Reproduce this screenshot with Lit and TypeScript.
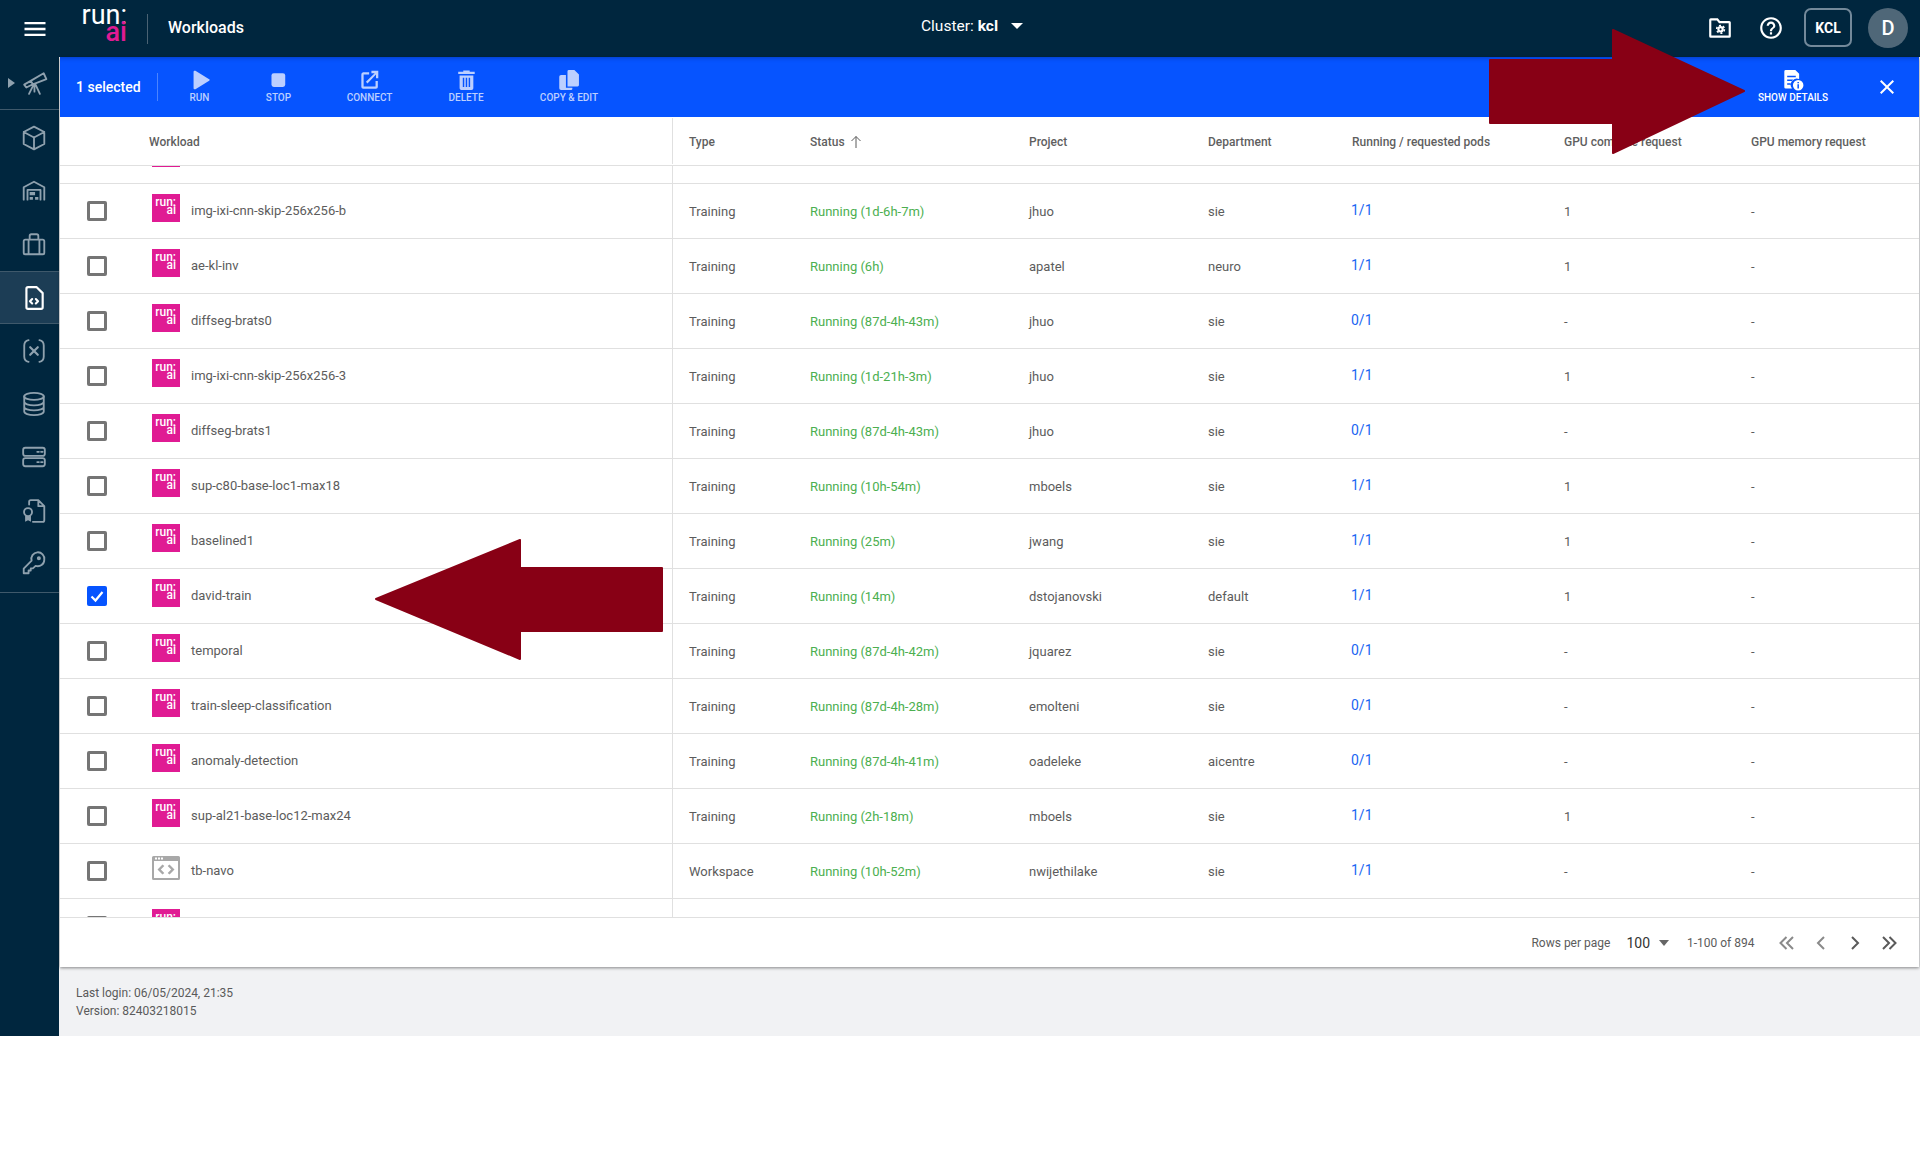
import { css, html, LitElement, svg } from 'lit';
import { customElement } from 'lit/decorators.js';

interface JobRow {
  name: string;
  type: string;
  status: string;
  project: string;
  department: string;
  pods: string;
  gpu: string;
  selected?: boolean;
}

const t = (name: string, status: string, project: string, department: string, pods: string, gpu: string): JobRow => ({
  name, type: 'Training', status, project, department, pods, gpu,
});

const ROWS: JobRow[] = [
  t('img-ixi-cnn-skip-256x256-b', 'Running (1d-6h-7m)', 'jhuo', 'sie', '1/1', '1'),
  t('ae-kl-inv', 'Running (6h)', 'apatel', 'neuro', '1/1', '1'),
  t('diffseg-brats0', 'Running (87d-4h-43m)', 'jhuo', 'sie', '0/1', '-'),
  t('img-ixi-cnn-skip-256x256-3', 'Running (1d-21h-3m)', 'jhuo', 'sie', '1/1', '1'),
  t('diffseg-brats1', 'Running (87d-4h-43m)', 'jhuo', 'sie', '0/1', '-'),
  t('sup-c80-base-loc1-max18', 'Running (10h-54m)', 'mboels', 'sie', '1/1', '1'),
  t('baselined1', 'Running (25m)', 'jwang', 'sie', '1/1', '1'),
  { ...t('david-train', 'Running (14m)', 'dstojanovski', 'default', '1/1', '1'), selected: true },
  t('temporal', 'Running (87d-4h-42m)', 'jquarez', 'sie', '0/1', '-'),
  t('train-sleep-classification', 'Running (87d-4h-28m)', 'emolteni', 'sie', '0/1', '-'),
  t('anomaly-detection', 'Running (87d-4h-41m)', 'oadeleke', 'aicentre', '0/1', '-'),
  t('sup-al21-base-loc12-max24', 'Running (2h-18m)', 'mboels', 'sie', '1/1', '1'),
  { ...t('tb-navo', 'Running (10h-52m)', 'nwijethilake', 'sie', '1/1', '-'), type: 'Workspace' },
];

const NAV_ICONS = [
  // cube
  svg`<path d="M12 1.500 21.500 6.500v11L12 22.500 2.500 17.500v-11zM2.500 6.500 12 11.500 21.500 6.500M12 11.500v11"/>`,
  // warehouse, open at the bottom
  svg`<path d="M2.500 20V8.500L12 3.500l9.500 5V20M6 20V11h12v9"/><path class="solid" d="M8 13h5v3H8zM8 17.500h3V20H8zM13 17.500h3V20h-3z"/>`,
  // briefcase
  svg`<path d="M4 8h16a1.500 1.500 0 0 1 1.500 1.500v10.500a1.500 1.500 0 0 1-1.500 1.500H4A1.500 1.500 0 0 1 2.500 20V9.500A1.500 1.500 0 0 1 4 8zM8 8V4.500A1.500 1.500 0 0 1 9.500 3h5A1.500 1.500 0 0 1 16 4.500V8M7 8v13.500M17 8v13.500"/>`,
  // workload file with code brackets
  svg`<path class="heavy" d="M6.500 2h8l5.500 5.500V20.500a1.500 1.500 0 0 1-1.500 1.500H6.500A1.500 1.500 0 0 1 5 20.500V3.500A1.500 1.500 0 0 1 6.500 2zM10.300 13 8.300 15l2 2M13.700 13l2 2-2 2"/>`,
  // (x) variables
  svg`<path d="M7 2C4 2.500 3 4.500 3 7v10c0 2.500 1 4.500 4 5M17 2c3 .5 4 2.500 4 5v10c0 2.500-1 4.500-4 5"/><path class="heavy" d="M8.500 8.500l7 7M15.500 8.500l-7 7"/>`,
  // database
  svg`<ellipse cx="12" cy="5" rx="9" ry="3.200"/><path d="M3 5v14c0 1.800 4 3.200 9 3.200s9-1.400 9-3.200V5M3 10c0 1.800 4 3.200 9 3.200s9-1.400 9-3.200M3 14.700c0 1.800 4 3.200 9 3.200s9-1.400 9-3.200"/>`,
  // servers
  svg`<rect x="2" y="3.500" width="20" height="7.500" rx="2"/><rect x="2" y="13" width="20" height="7.500" rx="2"/><path d="M15 7.200h1.500M18.500 7.200H20M15 16.700h1.500M18.500 16.700H20"/>`,
  // credential file
  svg`<path d="M7.500 6V3.500A1.500 1.500 0 0 1 9 2h7l5.500 5.500v13A1.500 1.500 0 0 1 20 22h-9M16 2v5.500h5.500"/><circle cx="6.500" cy="13" r="3.700"/><path class="solid" d="M3.800 16.500h5.400V22l-2.700-1.500L3.800 22z"/>`,
  // key
  svg`<path d="M21.500 8a6 6 0 0 1-8 5.700L11 16H9v2H7v2.500H2.500v-4.300l7.300-7.300A6 6 0 1 1 21.500 8z"/><circle cx="16.500" cy="6.800" r="1"/>`,
];

const ACTIONS = [
  { label: 'RUN', icon: svg`<path d="M5 3c0-1 1-1.500 2-1l15 9.200c.8.500.8 1.100 0 1.600L7 22c-1 .5-2 0-2-1z"/>` },
  { label: 'STOP', icon: svg`<rect x="4.500" y="4.500" width="15" height="15" rx="2.500"/>` },
  { label: 'CONNECT', icon: svg`<path d="M19 19H6V6h6V3.500H5.500A2.500 2.500 0 0 0 3.500 6v13.500a2 2 0 0 0 2 2h14a2 2 0 0 0 2-2V13H19zM14.500 2v2.500h3.600L8.500 14l1.700 1.700 9.300-9.600V10H22V2z"/>` },
  { label: 'DELETE', icon: svg`<path fill-rule="evenodd" d="M4.500 7h15v14a2 2 0 0 1-2 2h-11a2 2 0 0 1-2-2zM3 3h5.500V1.500h7V3H21v2.500H3zM8 9.500v10h1.600v-10zM11.200 9.500v10h1.600v-10zM14.400 9.500v10H16v-10z"/>` },
  { label: 'COPY & EDIT', icon: svg`<path d="M12 1h6l5 5v11.500a1.500 1.500 0 0 1-1.500 1.500H10.500V2.500A1.500 1.500 0 0 1 12 1zM3.500 6.500H8.800V20.500h7v1A1.500 1.500 0 0 1 14.300 23H3.500A2 2 0 0 1 1.500 21V8.500a2 2 0 0 1 2-2z"/>` },
];

@customElement('app-root')
export class AppRoot extends LitElement {
  static styles = css`
    :host {
      display: block;
      position: relative;
      width: 1920px;
      height: 1152px;
      font-family: Roboto, "Liberation Sans", sans-serif;
      color: #5c5c5c;
      background: #fff;
      overflow: hidden;
    }
    .shell {
      height: 1036px;
      display: grid;
      grid-template-rows: 57px 1fr;
      background: #f1f2f4;
    }
    .topbar {
      display: flex;
      align-items: center;
      background: #00263e;
      color: #fff;
      position: relative;
    }
    .burger {
      width: 28px;
      height: 28px;
      margin-left: 21px;
      fill: #fff;
    }
    .logo {
      margin: 0 0 9px 32px;
      width: 46px;
      display: flex;
      flex-direction: column;
      align-items: flex-end;
      font-weight: 400;
      font-size: 27px;
      line-height: 17px;
    }
    .logo b {
      font-weight: 500;
      color: #e01b93;
    }
    .logo-sep {
      width: 1px;
      height: 30px;
      margin: 0 20px;
      background: #4a6273;
    }
    .page-title {
      font-size: 16px;
      font-weight: 500;
      padding-bottom: 2px;
    }
    .cluster {
      position: absolute;
      left: 921px;
      top: 16px;
      display: flex;
      align-items: center;
      font-size: 15.500px;
      line-height: 20px;
    }
    .cluster b {
      font-weight: 700;
      margin-left: 4px;
    }
    .cluster i {
      margin-left: 13px;
      border: 6px solid transparent;
      border-top: 6px solid #fff;
      border-bottom: 0;
    }
    .top-right {
      margin-left: auto;
      display: flex;
      align-items: center;
      padding: 0 12px 2px 0;
    }
    .top-icon {
      width: 26px;
      height: 26px;
      margin-right: 25px;
      fill: #fff;
    }
    .top-icon .gear {
      fill: none;
      stroke: #fff;
    }
    .top-icon.help {
      margin-right: 20px;
    }
    .kcl {
      width: 44px;
      height: 35px;
      border: 2px solid #73899a;
      border-radius: 7px;
      display: flex;
      align-items: center;
      justify-content: center;
      font-size: 14px;
      font-weight: 700;
    }
    .avatar {
      width: 40px;
      height: 40px;
      margin-left: 16px;
      border-radius: 50%;
      background: #4f6778;
      display: flex;
      align-items: center;
      justify-content: center;
      font-size: 20px;
      font-weight: 500;
    }
    .body {
      display: grid;
      grid-template-columns: 59px 1fr;
      min-height: 0;
    }
    .sidebar {
      background: #00263e;
      display: flex;
      flex-direction: column;
    }
    .nav-first {
      height: 53px;
      display: flex;
      align-items: center;
      border-bottom: 1px solid #3f596b;
      box-sizing: border-box;
    }
    .nav-first i {
      margin-left: 8px;
      border: 5px solid transparent;
      border-left: 7px solid #8fa1ae;
      border-right: 0;
    }
    .nav-first svg {
      margin-left: 7px;
    }
    .nav-icon {
      width: 26px;
      height: 26px;
      fill: none;
      stroke: #8fa1ae;
      stroke-width: 1.700;
      stroke-linejoin: round;
      stroke-linecap: round;
    }
    .nav-icon .solid {
      fill: #8fa1ae;
      stroke: none;
    }
    .nav-icon .heavy {
      stroke-width: 2;
    }
    .nav-list {
      padding-top: 1px;
      border-bottom: 1px solid #3f596b;
      height: 481px;
      box-sizing: content-box;
    }
    .nav-item {
      height: 53.300px;
      display: flex;
      align-items: center;
      justify-content: center;
      padding-left: 9px;
      box-sizing: border-box;
    }
    .nav-item.active {
      background: #1c3d55;
      border-top: 1px solid #3f596b;
      border-bottom: 1px solid #3f596b;
    }
    .nav-item.active .nav-icon {
      stroke: #fff;
    }
    .main {
      position: relative;
      min-width: 0;
      margin-left: 1px;
    }
    .panel {
      background: #fff;
      box-shadow: 0 1px 3px rgba(0, 0, 0, 0.45);
      margin-right: 1px;
    }
    .actions {
      height: 60px;
      background: #0654ff;
      display: flex;
      align-items: center;
      color: #fff;
      box-shadow: inset 0 5px 4px -4px rgba(0, 20, 80, 0.35);
    }
    .selected {
      font-size: 14px;
      font-weight: 500;
      margin-left: 16px;
      width: 81px;
      height: 28px;
      line-height: 29px;
      border-right: 1px solid #4b84ff;
      box-sizing: content-box;
    }
    .action {
      position: absolute;
      top: 0;
      height: 60px;
      display: flex;
      flex-direction: column;
      align-items: center;
      transform: translateX(-50%);
      font-size: 10px;
      font-weight: 500;
      color: #bccfff;
      white-space: nowrap;
    }
    .action svg {
      width: 22px;
      height: 22px;
      margin-top: 12px;
      fill: #bccfff;
    }
    .action span {
      margin-top: 1px;
      line-height: 12px;
    }
    .action.on {
      color: #fff;
    }
    .action.on svg {
      fill: #fff;
    }
    .close {
      margin-left: auto;
      margin-right: 20px;
      width: 24px;
      height: 24px;
      fill: #fff;
    }
    .row {
      display: grid;
      grid-template-columns: 89px 524px 137px 219px 179px 144px 212px 187px 1fr;
      align-items: center;
    }
    .head {
      height: 49px;
      box-sizing: border-box;
      padding-top: 2px;
      border-bottom: 1px solid #e0e0e0;
      font-size: 12px;
      font-weight: 500;
      color: #5f5f5f;
      background: #fff;
      position: relative;
    }
    .head .sep {
      margin-top: -2px;
      padding-top: 2px;
    }
    .head .row-cell,
    .tr .row-cell {
      height: 100%;
      display: flex;
      align-items: center;
    }
    .sep {
      border-right: 1px solid #e0e0e0;
      box-sizing: border-box;
    }
    .type {
      padding-left: 16px;
      box-sizing: border-box;
    }
    .sort {
      width: 14px;
      height: 14px;
      margin-left: 4px;
      fill: none;
      stroke: #5a5a5a;
      stroke-width: 1;
    }
    .scroll {
      height: 751px;
      overflow: hidden;
      border-bottom: 1px solid #e0e0e0;
    }
    .rows {
      margin-top: -37px;
    }
    .tr {
      height: 55px;
      box-sizing: border-box;
      border-bottom: 1px solid #e0e0e0;
      font-size: 13px;
      color: #5c5c5c;
    }
    .check {
      width: 20px;
      height: 20px;
      margin-left: 27px;
      box-sizing: border-box;
      border: 3px solid #757575;
      border-radius: 2px;
      display: block;
    }
    .check.on {
      border: 0;
      background: #0654ff;
      stroke: #fff;
      stroke-width: 2.200;
      fill: none;
    }
    .job-icon {
      flex: none;
      width: 28px;
      height: 28px;
      margin: 0 11px 6px 3px;
      background: #e01b93;
      color: #fff;
      font-size: 12px;
      font-weight: 500;
      line-height: 8px;
      padding: 4px 4px 0 0;
      box-sizing: border-box;
      text-align: right;
    }
    .job-icon span {
      display: block;
    }
    .ws-icon {
      flex: none;
      width: 28px;
      height: 24px;
      margin: 0 11px 6px 3px;
      fill: #a8a8a8;
    }
    .name {
      position: relative;
      top: -1px;
    }
    .status {
      color: #4caf50;
    }
    .pods {
      color: #1a66f2;
      position: relative;
      top: -1px;
      left: -1px;
      font-size: 14px;
    }
    .foot {
      height: 49px;
      display: flex;
      align-items: center;
      font-size: 12px;
    }
    .rpp {
      margin-left: auto;
    }
    .rpp-val {
      margin-left: 16px;
      font-size: 14px;
      color: #333;
    }
    .rpp-caret {
      margin-left: 9px;
      border: 5.500px solid transparent;
      border-top: 6px solid #666;
      border-bottom: 0;
    }
    .range {
      margin-left: 18px;
      width: 73px;
    }
    .pager {
      display: flex;
      margin: 0 18px 0 15px;
      gap: 10px;
    }
    .pager svg {
      width: 24px;
      height: 24px;
      fill: none;
      stroke-width: 2;
    }
    .pager svg.off {
      stroke: #8a8a8a;
    }
    .pager svg.live {
      stroke: #5a5a5a;
    }
    .login {
      padding: 17px 0 0 16px;
      font-size: 12px;
      line-height: 18px;
      color: #5a5a5a;
    }
    .callout {
      position: absolute;
      fill: #880015;
      stroke: #880015;
      stroke-width: 2;
      stroke-linejoin: round;
      pointer-events: none;
    }
    .callout.details {
      left: 1489px;
      top: 29px;
      width: 256px;
      height: 125px;
    }
    .callout.pick {
      left: 375px;
      top: 539px;
      width: 288px;
      height: 122px;
    }
  `;

  private _renderRow(row: JobRow | null, showLogo = true) {
    const isWorkspace = row?.type === 'Workspace';
    return html`
      <div class="row tr">
        <div class="row-cell">
          ${row?.selected
            ? html`<svg class="check on" viewBox="0 0 20 20"><path d="M4.500 10.500 8.500 14.500 15.500 6"/></svg>`
            : html`<span class="check"></span>`}
        </div>
        <div class="row-cell sep">
          ${isWorkspace
            ? html`<svg class="ws-icon" viewBox="0 0 28 24">
                <path fill-rule="evenodd" d="M1.500 0h25A1.500 1.500 0 0 1 28 1.500v21a1.500 1.500 0 0 1-1.500 1.500h-25A1.500 1.500 0 0 1 0 22.500v-21A1.500 1.500 0 0 1 1.500 0zM2 5v17h24V5zM3 1.500h2v2H3zM6 1.500h2v2H6zM9 1.500h2v2H9z"/>
                <path d="M10.500 8.500 12.300 10 8.800 13.500 12.300 17 10.500 18.500 5.500 13.500zM17.500 8.500 15.700 10 19.200 13.500 15.700 17 17.500 18.500 22.500 13.500z"/>
              </svg>`
            : html`<div class="job-icon">${showLogo ? html`<span>run:</span><span>ai</span>` : ''}</div>`}
          <span class="name">${row?.name ?? ''}</span>
        </div>
        <div class="row-cell type"><span>${row?.type ?? ''}</span></div>
        <div class="row-cell"><span class="status">${row?.status ?? ''}</span></div>
        <div class="row-cell"><span>${row?.project ?? ''}</span></div>
        <div class="row-cell"><span>${row?.department ?? ''}</span></div>
        <div class="row-cell"><span class="pods">${row?.pods ?? ''}</span></div>
        <div class="row-cell"><span>${row?.gpu ?? ''}</span></div>
        <div class="row-cell"><span>${row ? '-' : ''}</span></div>
      </div>
    `;
  }

  render() {
    const actionX = [139.500, 218.500, 309.500, 406, 509];
    return html`
      <div class="shell">
        <header class="topbar">
          <svg class="burger" viewBox="0 0 24 24"><path d="M3 18h18v-2H3v2zm0-5h18v-2H3v2zm0-7v2h18V6H3z"/></svg>
          <div class="logo"><span>run:</span><b>ai</b></div>
          <div class="logo-sep"></div>
          <div class="page-title">Workloads</div>
          <div class="cluster">Cluster:<b>kcl</b><i></i></div>
          <div class="top-right">
            <svg class="top-icon" viewBox="0 0 24 24">
              <path fill-rule="evenodd" d="M3.500 3H10l2 2.500h8.500A1.500 1.500 0 0 1 22 7v12.500a1.500 1.500 0 0 1-1.500 1.500h-17A1.500 1.500 0 0 1 2 19.500v-15A1.500 1.500 0 0 1 3.500 3zM4 5v14h16V7.500h-8.900L9.100 5z"/>
              <circle class="gear" cx="12.500" cy="13.200" r="2" stroke-width="2"/>
              <circle class="gear" cx="12.500" cy="13.200" r="3.600" stroke-width="1.400" stroke-dasharray="1.900 1.870"/>
            </svg>
            <svg class="top-icon help" viewBox="0 0 24 24"><path d="M11 18h2v-2h-2v2zm1-16C6.480 2 2 6.480 2 12s4.480 10 10 10 10-4.480 10-10S17.520 2 12 2zm0 18c-4.410 0-8-3.590-8-8s3.590-8 8-8 8 3.590 8 8-3.590 8-8 8zm0-14c-2.210 0-4 1.790-4 4h2c0-1.100.9-2 2-2s2 .9 2 2c0 2-3 1.750-3 5h2c0-2.250 3-2.500 3-5 0-2.210-1.790-4-4-4z"/></svg>
            <div class="kcl">KCL</div>
            <div class="avatar">D</div>
          </div>
        </header>
        <div class="body">
          <nav class="sidebar">
            <div class="nav-first">
              <i></i>
              <svg class="nav-icon" viewBox="0 0 24 24"><path d="M2 13.500 8 10l2 3.200-6 3zM8 10 20 3l2.500 5.500-12.500 4.700zM10.500 14l-4 8M12.500 13.500l4 8.500M11.500 14v6"/></svg>
            </div>
            <div class="nav-list">
              ${NAV_ICONS.map((icon, i) => html`
                <div class="nav-item ${i === 3 ? 'active' : ''}">
                  <svg class="nav-icon" viewBox="0 0 24 24">${icon}</svg>
                </div>
              `)}
            </div>
          </nav>
          <main class="main">
            <div class="panel">
              <div class="actions">
                <div class="selected">1 selected</div>
                ${ACTIONS.map((a, i) => html`
                  <div class="action" style="left:${actionX[i]}px">
                    <svg viewBox="0 0 24 24">${a.icon}</svg>
                    <span>${a.label}</span>
                  </div>
                `)}
                <div class="action on" style="left:1733px">
                  <svg viewBox="1 1 23 23">
                    <path fill-rule="evenodd" d="M5 2h10l4 4v5.500a6.500 6.500 0 0 0-7.500 10H5A1.500 1.500 0 0 1 3.500 20V3.500A1.500 1.500 0 0 1 5 2zM6.500 8v1.500h9V8zM6.500 12v1.500h6V12zM6.500 16v1.500h3.500V16z"/>
                    <path fill-rule="evenodd" d="M18 12.500a5.500 5.500 0 1 1 0 11 5.500 5.500 0 0 1 0-11zM17.200 14.500V16h1.600v-1.500zM17.200 17v4.500h1.600V17z"/>
                  </svg>
                  <span>SHOW DETAILS</span>
                </div>
                <svg class="close" viewBox="0 0 24 24"><path d="M19 6.410 17.590 5 12 10.590 6.410 5 5 6.410 10.590 12 5 17.590 6.410 19 12 13.410 17.590 19 19 17.590 13.410 12z"/></svg>
              </div>
              <div class="row head">
                <div class="row-cell"></div>
                <div class="row-cell sep">Workload</div>
                <div class="row-cell type">Type</div>
                <div class="row-cell">Status
                  <svg class="sort" viewBox="0 0 14 14"><path d="M7 13V1.500M2.500 6 7 1.500 11.500 6"/></svg>
                </div>
                <div class="row-cell">Project</div>
                <div class="row-cell">Department</div>
                <div class="row-cell">Running / requested pods</div>
                <div class="row-cell">GPU compute request</div>
                <div class="row-cell">GPU memory request</div>
              </div>
              <div class="scroll">
                <div class="rows">
                  ${this._renderRow(null, false)}
                  ${ROWS.map(r => this._renderRow(r))}
                  ${this._renderRow(null)}
                </div>
              </div>
              <div class="foot">
                <span class="rpp">Rows per page</span>
                <span class="rpp-val">100</span>
                <i class="rpp-caret"></i>
                <span class="range">1-100 of 894</span>
                <div class="pager">
                  <svg class="off" viewBox="0 0 24 24"><path d="M11.500 6 5.500 12l6 6M18 6l-6 6 6 6"/></svg>
                  <svg class="off" viewBox="0 0 24 24"><path d="M15 6l-6 6 6 6"/></svg>
                  <svg class="live" viewBox="0 0 24 24"><path d="M9 6l6 6-6 6"/></svg>
                  <svg class="live" viewBox="0 0 24 24"><path d="M6 6l6 6-6 6M12.500 6l6 6-6 6"/></svg>
                </div>
              </div>
            </div>
            <div class="login">Last login: 06/05/2024, 21:35<br />Version: 82403218015</div>
          </main>
        </div>
      </div>
      <svg class="callout details" viewBox="0 0 256 125">
        <path d="M1 31H124V1L255 62 124 124V94H1z"/>
      </svg>
      <svg class="callout pick" viewBox="0 0 288 122">
        <path d="M1 60 145 1V29H287V92H145V120z"/>
      </svg>
    `;
  }
}
